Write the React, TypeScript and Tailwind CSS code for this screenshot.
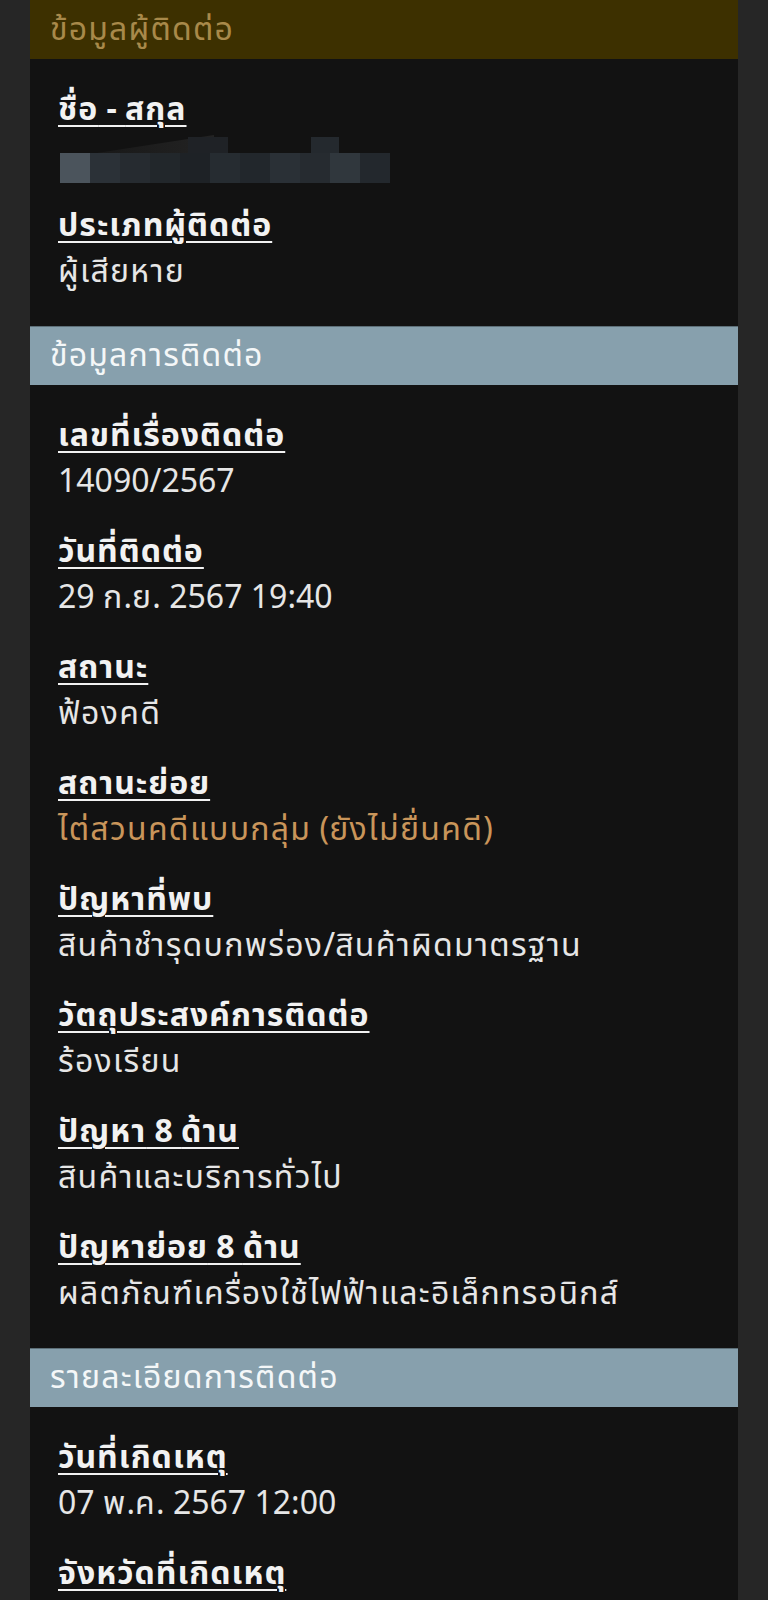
import React from "react";

const FONT = '"Noto Sans Thai", "Noto Sans Thai UI", "Noto Sans", "DejaVu Sans", sans-serif';

type Field = { label: string; value?: string; orange?: boolean; blurred?: boolean };

function Spaced({ text, cls }: { text: string; cls: string }) {
  const parts = text.split(/([\u0E00-\u0E7F]+)/);
  return (
    <>
      {parts.map((p, i) =>
        /[\u0E00-\u0E7F]/.test(p) ? (
          <span key={i} className={cls}>
            {p}
          </span>
        ) : (
          <span key={i}>{p}</span>
        )
      )}
    </>
  );
}

function Header({ title, variant }: { title: string; variant: "gold" | "blue" }) {
  return (
    <div
      className={
        variant === "gold"
          ? "h-[59px] flex items-center px-[20px] bg-[#3d3000] text-[#a8894a] text-[32px]"
          : "h-[59px] flex items-center px-[20px] bg-[#87a0ad] text-[#f4f7f8] text-[32px] border-t border-[#5d6f78]"
      }
    >
      <Spaced text={title} cls="tracking-[1.2px]" />
    </div>
  );
}

function Blurred() {
  const blocks = [
    "#4b545c", "#2b3137", "#262b30", "#22272b", "#1e2226", "#262c31", "#22272c", "#2a3036", "#262b30", "#30373d", "#23282d",
  ];
  return (
    <div className="relative h-[46px]">
      <div className="absolute left-[26px] top-[2px] w-[130px] h-[20px] bg-gradient-to-r from-[#1a1a1a] to-[#2a2a2a] opacity-70 [clip-path:polygon(0_100%,100%_0,100%_100%)]" />
      <div className="absolute left-[130px] top-[4px] w-[40px] h-[18px] bg-[#1f2226]" />
      <div className="absolute left-[253px] top-[4px] w-[28px] h-[18px] bg-[#24292e]" />
      <div className="absolute left-[2px] top-[20px] flex h-[30px]">
        {blocks.map((c, i) => (
          <div key={i} className="w-[30px] h-full" style={{ backgroundColor: c }} />
        ))}
      </div>
    </div>
  );
}

function Section({ title, variant, fields }: { title: string; variant: "gold" | "blue"; fields: Field[] }) {
  return (
    <div>
      <Header title={title} variant={variant} />
      <div className="px-[28px] pt-[28px] pb-[31px] flex flex-col gap-[24px]">
        {fields.map((f, i) => (
          <div key={i} className="flex flex-col">
            <div className="h-[46px] leading-[46px] text-[32px] font-bold text-[#f2f2f2] whitespace-nowrap">
              <span className="underline decoration-2 underline-offset-[5px]">
                <Spaced text={f.label} cls="tracking-[1px]" />
              </span>
            </div>
            {f.blurred ? (
              <Blurred />
            ) : f.value !== undefined ? (
              <div
                className={
                  "h-[46px] leading-[46px] text-[32px] whitespace-nowrap " +
                  (f.orange ? "text-[#c9955a]" : "text-[#e6e6e6]")
                }
              >
                <Spaced text={f.value} cls="tracking-[1.3px]" />
              </div>
            ) : null}
          </div>
        ))}
      </div>
    </div>
  );
}

export default function App() {
  return (
    <div className="w-[768px] h-[1600px] overflow-hidden bg-[#262626]" style={{ fontFamily: FONT }}>
      <div className="mx-[30px] bg-[#121212] min-h-[1600px]">
        <Section
          title="ข้อมูลผู้ติดต่อ"
          variant="gold"
          fields={[
            { label: "ชื่อ - สกุล", blurred: true },
            { label: "ประเภทผู้ติดต่อ", value: "ผู้เสียหาย" },
          ]}
        />
        <Section
          title="ข้อมูลการติดต่อ"
          variant="blue"
          fields={[
            { label: "เลขที่เรื่องติดต่อ", value: "14090/2567" },
            { label: "วันที่ติดต่อ", value: "29 ก.ย. 2567 19:40" },
            { label: "สถานะ", value: "ฟ้องคดี" },
            { label: "สถานะย่อย", value: "ไต่สวนคดีแบบกลุ่ม (ยังไม่ยื่นคดี)", orange: true },
            { label: "ปัญหาที่พบ", value: "สินค้าชำรุดบกพร่อง/สินค้าผิดมาตรฐาน" },
            { label: "วัตถุประสงค์การติดต่อ", value: "ร้องเรียน" },
            { label: "ปัญหา 8 ด้าน", value: "สินค้าและบริการทั่วไป" },
            { label: "ปัญหาย่อย 8 ด้าน", value: "ผลิตภัณฑ์เครื่องใช้ไฟฟ้าและอิเล็กทรอนิกส์" },
          ]}
        />
        <Section
          title="รายละเอียดการติดต่อ"
          variant="blue"
          fields={[
            { label: "วันที่เกิดเหตุ", value: "07 พ.ค. 2567 12:00" },
            { label: "จังหวัดที่เกิดเหตุ" },
          ]}
        />
      </div>
    </div>
  );
}
